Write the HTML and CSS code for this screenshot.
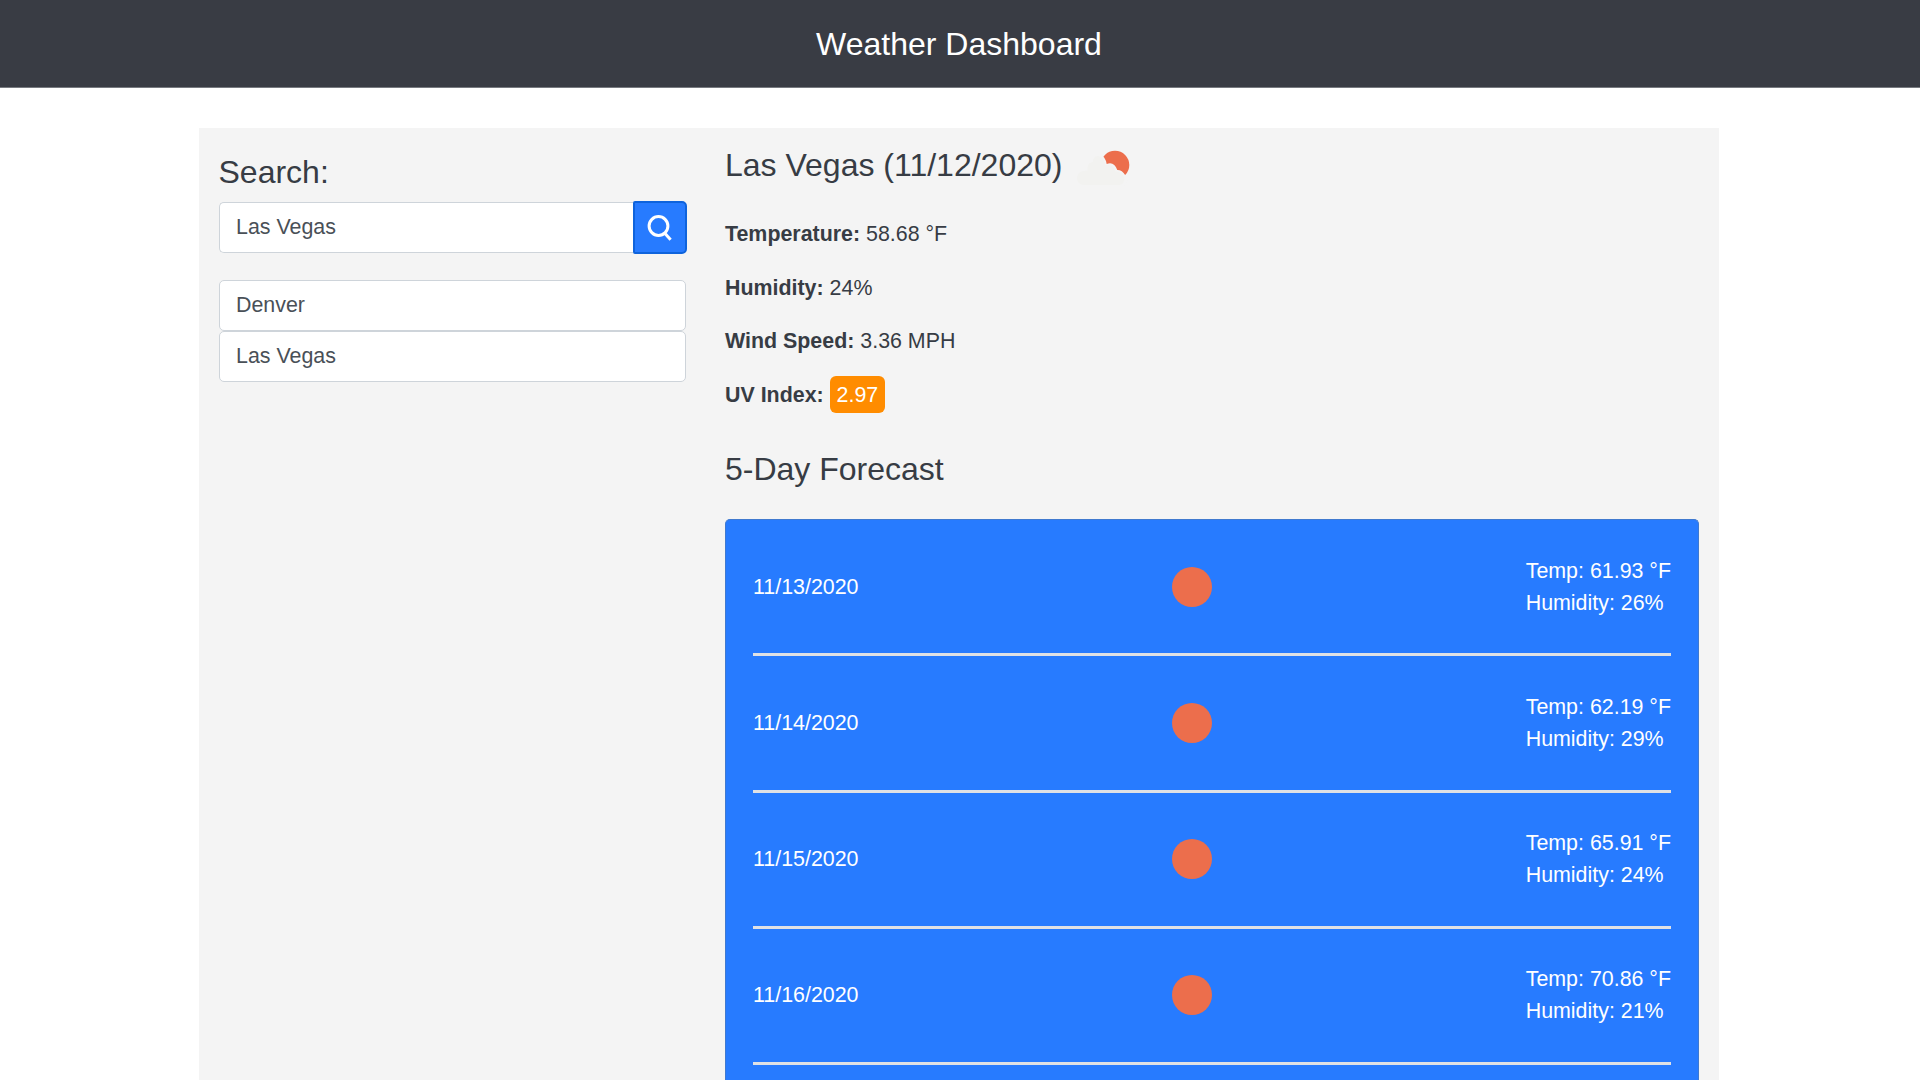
FILE: index.html
```html
<!DOCTYPE html>
<html lang="en">
<head>
<meta charset="utf-8">
<title>Weather Dashboard</title>
<link rel="stylesheet" href="styles.css">
</head>
<body>
<header class="header"><h1 class="header-title">Weather Dashboard</h1></header>
<main class="container">
  <aside class="sidebar">
    <h2 class="heading search-heading">Search:</h2>
    <form class="search">
      <input class="search-input" type="text" value="Las Vegas" aria-label="City">
      <button class="search-button" type="button" aria-label="Search">
        <svg class="search-icon" viewBox="0 0 28 30"><circle cx="12.5" cy="13" r="9.4"/><path d="M18.400 19.800L24.6 26.800"/></svg>
      </button>
    </form>
    <ul class="history">
      <li class="history-item">Denver</li>
      <li class="history-item">Las Vegas</li>
    </ul>
  </aside>
  <section class="content">
    <div class="city">
      <h2 class="heading">Las Vegas (11/12/2020)</h2>
      <svg class="city-icon" viewBox="0 0 54 36">
        <circle class="sun" cx="39" cy="15" r="14.3"/>
        <path class="cloud-gap" d="M23 2L28.3 7.7Q30.2 10.500 30.7 14Q38 11 41.3 20Q46 19.8 49.3 25.3L52 30L48 36H20Z"/>
        <path class="cloud" d="M8 35a7 7 0 0 1 0-14q1.500-.5 3.500-.3C11 14 14 12 17 12C17 3 28 4 29 15.500Q37 13 39.500 21.500C49 21 52 34 43 35Z"/>
      </svg>
    </div>
    <p class="stat"><b>Temperature:</b> 58.68 °F</p>
    <p class="stat"><b>Humidity:</b> 24%</p>
    <p class="stat"><b>Wind Speed:</b> 3.36 MPH</p>
    <p class="stat"><b>UV Index:</b> <span class="uv">2.97</span></p>
    <h2 class="heading forecast-heading">5-Day Forecast</h2>
    <div class="forecast">
      <div class="day"><span class="date">11/13/2020</span><span class="sun-dot"></span><div class="reading">Temp: 61.93 °F<br>Humidity: 26%</div></div>
      <div class="day"><span class="date">11/14/2020</span><span class="sun-dot"></span><div class="reading">Temp: 62.19 °F<br>Humidity: 29%</div></div>
      <div class="day"><span class="date">11/15/2020</span><span class="sun-dot"></span><div class="reading">Temp: 65.91 °F<br>Humidity: 24%</div></div>
      <div class="day"><span class="date">11/16/2020</span><span class="sun-dot"></span><div class="reading">Temp: 70.86 °F<br>Humidity: 21%</div></div>
    </div>
  </section>
</main>
</body>
</html>
```
FILE: styles.css
```css
* { box-sizing: border-box; }
body {
  margin: 0;
  height: 1080px;
  overflow: hidden;
  background: #fff;
  color: #373c44;
  font: 21.4px/32.3px "Liberation Sans", Arial, sans-serif;
}
.header {
  height: 88px;
  padding: 25px 2px 0 0;
  background: #393c44;
  border-bottom: 1px solid #777a80;
  text-align: center;
}
.header-title, .heading {
  margin: 0;
  font-size: 32px;
  line-height: 39px;
  font-weight: 400;
  white-space: nowrap;
}
.header-title { color: #fff; }
.container {
  display: flex;
  width: 1520.500px;
  height: 952px;
  margin: 40px 0 0 198.500px;
  background: #f4f4f4;
}
.sidebar { flex: none; width: 507px; padding: 25px 20px 0; }
.search-heading { margin-bottom: 9px; }
.search { display: flex; height: 53px; margin-right: -1px; align-items: center; }
.search-input {
  flex: 1;
  min-width: 0;
  height: 51px;
  padding: 0 16.500px;
  border: 1px solid #ced4da;
  border-right: 0;
  border-radius: 5px 0 0 5px;
  background: #fff;
  color: #495057;
  font: inherit;
}
.search-button {
  display: flex;
  width: 54px;
  height: 53px;
  padding: 10px 11px;
  border: 2px solid #0e63dc;
  border-radius: 2px 5px 5px 2px;
  background: #277bff;
}
.search-icon { flex: none; width: 28px; height: 30px; fill: none; stroke: #fff; stroke-width: 3; }
.history { margin: 26px 0 0; padding: 0; list-style: none; }
.history-item {
  height: 51px;
  padding: 8px 16.500px;
  border: 1px solid #ced4da;
  border-radius: 5px;
  background: #fff;
  color: #495057;
}
.content { flex: 1; padding: 18px 20px 0 19.500px; }
.city { display: flex; height: 72px; }
.city-icon { width: 54px; height: 36px; margin: 4px 0 0 14px; }
.sun { fill: #ec6e4c; }
.cloud-gap { fill: #f4f4f4; }
.cloud { fill: #f2f2f0; }
.stat { height: 32.4px; margin: 0 0 21.2px; }
.uv { padding: 6.500px 7px; border-radius: 6px; background: #ff8c00; color: #fff; }
.forecast-heading { margin: 0 0 30px; padding-top: 18px; }
.forecast {
  height: 563px;
  padding: 0 27px;
  overflow: hidden;
  border: 1px solid #3f79cf;
  border-bottom: 0;
  border-radius: 5px 5px 0 0;
  background: #277bff;
  color: #fff;
}
.day {
  display: flex;
  justify-content: space-between;
  align-items: center;
  height: 136.100px;
  border-bottom: 3px solid #dfe1e5;
}
.sun-dot { width: 40px; height: 40px; border-radius: 50%; background: #ec6e4c; }
```
